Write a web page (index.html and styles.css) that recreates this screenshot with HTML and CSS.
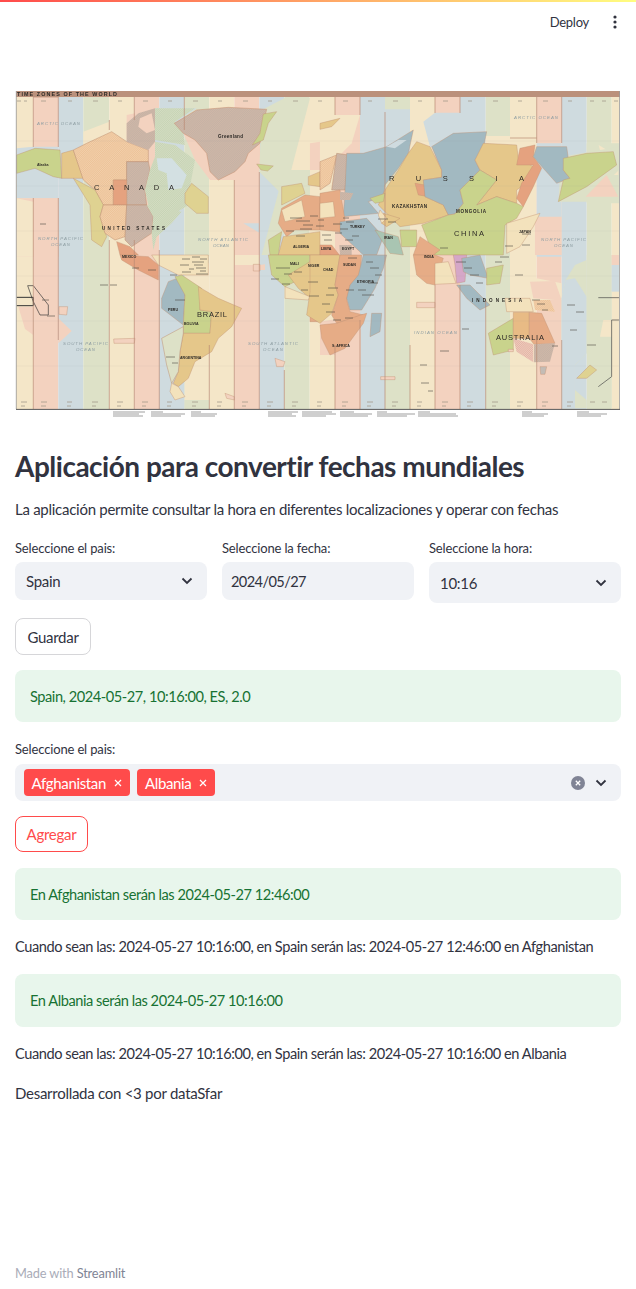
FILE: index.html
```html
<!DOCTYPE html>
<html lang="en">
<head>
    <meta charset="UTF-8" />
    <meta name="viewport" content="width=device-width, initial-scale=1" />
    <title>Aplicación para convertir fechas mundiales</title>
    <link rel="stylesheet" href="styles.css">
</head>
<body>
    <div class="top-line"></div>
    <header class="header">
        <span class="deploy">Deploy</span>
        <svg class="menu" width="4" height="14" viewBox="0 0 4 14"><circle cx="2" cy="2" r="1.6"/><circle cx="2" cy="7" r="1.6"/><circle cx="2" cy="12" r="1.6"/></svg>
    </header>

    <main class="main">
        <svg class="map" viewBox="15 91 606 328" width="606" height="328">
            <defs>
                <pattern id="hatch-grey" width="4.5" height="4.5" patternUnits="userSpaceOnUse" patternTransform="rotate(45)"><rect width="4.5" height="4.5" fill="#c4b2a6"/><rect width="1.8" height="4.5" fill="#d3b8a6"/></pattern>
                <pattern id="hatch-orange" width="4.5" height="4.5" patternUnits="userSpaceOnUse" patternTransform="rotate(45)"><rect width="4.5" height="4.5" fill="#edc297"/><rect width="1.8" height="4.5" fill="#f3d3b0"/></pattern>
                <pattern id="hatch-green" width="4.5" height="4.5" patternUnits="userSpaceOnUse" patternTransform="rotate(45)"><rect width="4.5" height="4.5" fill="#c6d4b4"/><rect width="1.8" height="4.5" fill="#d8dfc7"/></pattern>
                <pattern id="hatch-pink" width="4.5" height="4.5" patternUnits="userSpaceOnUse" patternTransform="rotate(45)"><rect width="4.5" height="4.5" fill="#e4b3a4"/><rect width="1.8" height="4.5" fill="#f0d3c5"/></pattern>
            </defs>

            <!-- time zone stripes -->
            <g>
                <rect class="z-cream" x="16" y="97" width="17.3" height="312"/>
                <rect class="z-peach" x="33.3" y="97" width="25" height="312"/>
                <rect class="z-blue" x="58.3" y="97" width="25" height="312"/>
                <rect class="z-green" x="83.3" y="97" width="26" height="312"/>
                <rect class="z-cream" x="109.3" y="97" width="25" height="312"/>
                <rect class="z-peach" x="134.3" y="97" width="25" height="312"/>
                <rect class="z-blue" x="159.3" y="97" width="25" height="312"/>
                <rect class="z-green" x="184.3" y="97" width="25" height="312"/>
                <rect class="z-cream" x="209.3" y="97" width="25" height="312"/>
                <rect class="z-peach" x="234.3" y="97" width="25" height="312"/>
                <rect class="z-blue" x="259.3" y="97" width="25" height="312"/>
                <rect class="z-green" x="284.3" y="97" width="25.4" height="312"/>
                <rect class="z-cream" x="309.7" y="97" width="25.3" height="312"/>
                <rect class="z-peach" x="335" y="97" width="25" height="312"/>
                <rect class="z-blue" x="360" y="97" width="25" height="312"/>
                <rect class="z-green" x="385" y="97" width="25" height="312"/>
                <rect class="z-cream" x="410" y="97" width="25" height="312"/>
                <rect class="z-peach" x="435" y="97" width="25" height="312"/>
                <rect class="z-blue" x="460" y="97" width="25.7" height="312"/>
                <rect class="z-green" x="485.7" y="97" width="24.3" height="312"/>
                <rect class="z-cream" x="510" y="97" width="26.7" height="312"/>
                <rect class="z-peach" x="536.7" y="97" width="25" height="312"/>
                <rect class="z-blue" x="561.7" y="97" width="25" height="312"/>
                <rect class="z-green" x="586.7" y="97" width="25" height="312"/>
                <rect class="z-cream" x="611.7" y="97" width="7.6" height="312"/>
            </g>

            <!-- north west quarter -->
            <g class="q" transform="translate(15 90) scale(.3333)">
                <polygon class="z-blue" points="5,175 55,170 130,170 130,325 5,325"/>
                <polygon class="z-peach" points="5,325 130,325 130,500 5,500"/>
                <polygon class="z-cream" points="5,325 55,335 55,500 5,500"/>
                <polygon class="z-cream" points="205,125 283,95 283,240 205,240"/>
                <polygon class="z-peach" points="335,75 433,55 433,180 335,180"/>
                <polygon class="z-blue" points="420,55 545,55 478,100 505,130 510,300 420,300"/>
                <polygon class="z-peach" points="478,100 545,60 755,58 745,130 735,160 735,240 733,245 733,500 658,500 658,270 585,270 540,210 505,130"/>
                <polygon class="z-cream" points="583,270 658,270 658,500 583,500"/>
                <polygon class="z-green" points="740,60 808,25 885,25 885,320 808,320 733,245"/>
                <polygon class="z-cream" points="885,25 915,25 915,240 885,320 808,320"/>
                <polygon class="z-green" points="808,240 885,240 885,320 760,495 740,495"/>
                <polygon class="z-blue" points="685,400 733,400 733,428"/>

                <polygon class="l-green" points="5,195 60,175 135,180 140,265 115,260 60,235 5,250"/>
                <polygon class="l-yellow" points="140,190 175,180 205,265 140,265"/>
                <polygon points="175,180 215,160 290,125 335,155 400,180 400,215 335,215 335,270 295,270 295,345 265,345 240,300 205,270" fill="url(#hatch-orange)" stroke="#bf8f72" stroke-width="1.5"/>
                <polygon points="335,215 400,215 405,240 390,300 395,345 335,345" fill="url(#hatch-grey)" stroke="#bf8f72" stroke-width="1.5"/>
                <polygon points="335,100 370,70 420,55 420,155 400,180 335,155" fill="url(#hatch-grey)"/>
                <polygon points="375,85 410,70 420,120 395,130 370,110" fill="#f3d2bf"/>
                <polygon points="420,55 540,55 480,95 505,130 510,165 420,150" fill="url(#hatch-green)"/>
                <polygon points="420,155 480,165 540,210 525,290 530,340 480,370 425,425 410,390 400,345 390,300 405,240 420,200" fill="url(#hatch-green)"/>
                <polygon points="425,205 470,205 515,255 500,295 460,300 455,250 430,240" fill="#d3e0e2"/>
                <polygon class="l-orange-solid" points="295,270 335,270 335,345 295,345"/>
                <polygon class="l-pale-yellow" points="175,265 240,300 265,345 255,380 275,440 260,470 230,450 225,345"/>
                <polygon points="265,345 335,345 330,440 300,450 270,430 255,380" fill="url(#hatch-orange)" stroke="#bf8f72" stroke-width="1.5"/>
                <polygon points="335,345 395,345 415,380 410,430 350,470 330,450" fill="url(#hatch-grey)" stroke="#bf8f72" stroke-width="1.5"/>
                <polygon points="395,345 500,365 470,400 425,440 415,480 410,430 415,380" fill="url(#hatch-green)"/>
                <polygon class="l-orange-solid" points="305,455 345,470 370,495 315,495"/>
                <polygon class="l-pale-yellow" points="510,310 530,280 580,320 580,370 545,370 510,340"/>
                <polygon points="478,100 545,60 640,52 755,58 745,100 735,160 700,190 690,215 660,245 610,270 585,245 575,190 540,150 505,130" fill="url(#hatch-grey)" stroke="#c9906f" stroke-width="1.5"/>
                <polygon class="l-green" points="745,72 785,65 760,100 745,150 712,165 735,130"/>
                <polygon class="l-green" points="725,222 775,228 758,243 738,240"/>
                <polygon class="z-peach" points="885,160 915,155 915,240 885,240"/>
                <polygon class="l-yellow" points="880,260 915,245 915,290 880,285"/>
                <polygon class="l-pale-yellow" points="800,290 860,280 870,310 800,345"/>
                <polygon class="l-orange" points="800,355 870,315 915,320 915,420 840,420 815,440 790,400"/>
                <polygon class="l-cream" points="800,360 860,330 870,380 810,395"/>
                <polygon class="l-yellow" points="805,440 915,425 915,495 790,495"/>
                <polygon class="l-green" points="760,450 800,425 790,495 765,495"/>
            </g>

            <!-- north east quarter -->
            <g class="q" transform="translate(320 90) scale(.3333)">
                <polygon class="z-cream" points="0,75 120,75 95,160 60,195 0,250"/>
                <polygon class="z-blue" points="195,58 270,58 270,190 195,190"/>
                <polygon class="z-blue" points="345,68 420,68 420,190 330,170 310,95"/>
                <polygon class="z-cream" points="497,138 650,138 650,165 497,165"/>
                <polygon class="z-blue" points="650,160 725,160 725,500 650,500"/>
                <polygon class="z-peach" points="645,380 725,380 725,495 645,495"/>
                <polygon class="z-green" points="800,160 897,160 897,340 800,340"/>
                <polygon class="z-cream" points="836,165 895,200 895,255 860,255"/>
                <polygon class="z-green" points="725,200 897,170 897,240 800,335 715,335"/>
                <polygon class="z-peach" points="797,320 860,255 895,320"/>
                <polygon class="l-yellow" points="0,100 60,85 35,110 0,118"/>

                <polygon points="0,215 50,195 30,280 0,300" fill="url(#hatch-orange)" stroke="#bf8f72" stroke-width="1.5"/>
                <polygon points="50,190 85,195 75,300 35,300" fill="url(#hatch-grey)" stroke="#bf8f72" stroke-width="1.5"/>
                <polygon class="l-blue" points="80,190 130,190 200,170 280,120 265,190 235,235 195,285 190,320 145,335 175,370 70,380 75,300"/>
                <polygon class="z-blue" points="200,170 235,150 260,150 225,175"/>
                <polygon class="l-yellow" points="265,190 290,155 330,170 365,240 365,262 310,270 315,320 370,345 385,375 310,400 240,410 175,345 195,300 235,240"/>
                <polygon class="l-orange-solid" points="285,280 315,285 315,318 295,315"/>
                <polygon class="l-green" points="150,325 195,310 190,335 165,340"/>
                <polygon class="l-blue" points="335,170 400,130 500,125 490,175 465,210 480,240 420,300 430,340 405,372 385,375 370,345 315,320 310,270 365,262 365,240"/>
                <polygon class="l-yellow" points="490,160 590,165 595,205 640,230 620,280 590,300 590,340 530,320 470,345 530,270 480,240 465,210"/>
                <polygon class="l-green" points="420,300 480,240 530,270 470,345 530,320 590,340 610,350 590,385 555,405 550,495 340,495 305,405 385,375 405,372 430,340"/>
                <polygon class="l-orange-solid" points="600,175 645,165 640,200 665,235 640,290 610,350 590,325 605,280 640,225 590,225"/>
                <polygon class="l-blue" points="640,200 650,170 740,170 745,205 730,240 750,265 710,280 670,235"/>
                <polygon class="l-green" points="730,205 800,190 880,185 890,225 800,290 715,335 730,270 750,265 730,240"/>
                <polygon class="l-cream" points="560,400 660,370 640,410 600,470 560,490"/>
                <polygon class="l-orange" points="0,310 60,300 75,390 60,425 0,420"/>
                <polygon class="l-cream" points="0,340 40,335 45,380 0,385"/>
                <polygon points="60,305 100,310 90,330 60,330" fill="url(#hatch-grey)"/>
                <polygon class="l-blue" points="60,395 140,385 190,440 170,495 130,495 60,430"/>
                <polygon class="l-teal" points="165,420 235,440 250,495 210,490"/>
                <polygon class="l-green" points="240,420 290,420 290,470 245,470"/>
                <polygon class="l-orange" points="300,440 360,480 340,495 280,495"/>
                <polygon class="l-orange-solid" points="0,465 35,465 58,495 0,495"/>
                <polygon points="58,465 95,465 95,495 60,495" fill="url(#hatch-grey)"/>
                <polygon class="l-yellow" points="190,370 240,385 200,410 185,400"/>
                <polygon class="l-cream" points="180,360 200,385 185,400 175,375"/>
            </g>

            <!-- south west quarter -->
            <g class="q" transform="translate(15 255) scale(.3333)">
                <polygon class="z-cream" points="5,38 55,38 55,460 5,460"/>
                <polygon class="z-peach" points="10,155 55,155 55,240 30,222"/>
                <polygon class="z-peach" points="130,155 130,190 170,228 130,265"/>
                <polygon class="z-cream" points="508,25 583,25 583,435 508,435"/>
                <polygon class="z-green" points="508,435 583,435 583,460 508,460"/>
                <polygon class="z-blue" points="433,45 508,45 508,460 433,460"/>
                <polygon class="z-peach" points="358,45 433,45 433,250 358,250"/>
                <polygon class="z-cream" points="658,0 733,0 733,30 658,30"/>
                <polygon class="z-peach" points="733,30 750,28 750,45 733,45"/>
                <polygon points="38,92 55,92 100,150 100,180 75,180 55,140" fill="none" stroke="#333" stroke-width="2"/>
                <path d="M5 127 H55 V152 H5" fill="none" stroke="#333" stroke-width="3"/>
                <polygon class="l-peach-box" points="296,252 360,250 358,265 297,265"/>
                <polygon class="l-peach-box" points="132,155 158,155 155,180 132,178"/>
                <polygon class="l-peach-box" points="780,310 810,320 805,335 785,335"/>
                <polygon class="l-peach-box" points="630,415 658,425 658,435 635,430"/>

                <polygon class="l-orange-solid" points="315,0 400,5 430,30 430,75 370,45 320,15"/>
                <polygon class="l-cream" points="410,0 580,0 580,60 490,60 430,30"/>
                <polygon class="l-blue" points="460,80 500,65 510,120 505,210 440,160 440,130"/>
                <polygon class="l-green" points="480,65 500,60 560,100 555,165 590,170 585,235 505,235 505,210 510,120"/>
                <polygon class="l-yellow" points="550,95 610,130 680,160 650,215 610,250 590,290 540,320 520,370 490,395 475,385 490,350 495,290 505,235 585,235 590,170 555,165"/>
                <polygon class="z-green" points="440,250 505,215 505,235 495,290 490,350 470,385 455,330" stroke="#bf8f72" stroke-width="1.5"/>
                <polygon class="l-cream" points="470,385 490,395 510,425 480,435 465,410"/>
                <polygon class="l-green" points="760,0 885,0 880,60 810,95 770,60"/>
                <polygon class="l-yellow" points="820,60 885,20 915,0 915,140 880,125 850,100"/>
                <polygon class="l-cream" points="810,95 885,125 880,135 810,130"/>
                <polygon class="l-orange" points="885,135 915,130 915,200 885,200"/>
                <polygon class="l-peach-box" points="715,28 735,28 735,48 715,48"/>
            </g>

            <!-- south east quarter -->
            <g class="q" transform="translate(320 255) scale(.3333)">
                <polygon class="z-peach" points="0,200 122,180 122,460 45,460 45,300 0,300"/>
                <polygon class="z-cream" points="0,300 45,300 45,460 0,460"/>
                <polygon class="z-cream" points="620,70 650,70 725,85 725,135 572,135 572,70"/>
                <polygon class="z-peach" points="630,80 705,78 725,135 725,170 705,135 640,130"/>
                <polygon class="z-green" points="737,75 765,30 800,15 800,295 765,330 765,405 800,435 800,460 725,460 725,130"/>
                <polygon class="z-blue" points="737,75 725,130 725,460 765,460 765,330 800,295 800,125 765,70"/>
                <polygon class="z-green" points="800,0 875,0 875,460 835,460 835,395 875,365 800,295"/>
                <polygon class="z-cream" points="850,195 875,195 875,245 840,245"/>
                <polygon class="z-peach" points="875,0 897,0 897,30 875,30"/>
                <polygon class="z-blue" points="875,30 897,30 897,110 875,110"/>
                <path d="M835 128 H897 M875 195 H897 M835 395 L875 365 V195" fill="none" stroke="#444" stroke-width="2"/>
                <polygon class="z-blue" points="422,60 497,60 497,165 422,165"/>

                <polygon class="l-yellow" points="-30,0 60,0 45,90 55,120 35,175 0,205 -40,180 -30,110"/>
                <polygon class="l-orange" points="60,0 125,0 120,60 90,90 80,135 90,170 130,180 50,205 35,180 55,120 45,90"/>
                <polygon class="l-blue" points="130,0 200,0 190,40 165,100 125,165 90,165 80,130 90,90 115,60"/>
                <polygon class="l-orange" points="0,210 50,205 122,180 140,175 130,205 75,280 30,300 5,250"/>
                <polygon class="l-blue" points="155,175 185,175 180,230 150,245"/>
                <polygon class="l-orange" points="280,0 345,0 370,10 345,90 320,85 290,60"/>
                <polygon class="l-cream" points="345,25 385,20 408,85 345,88"/>
                <polygon class="l-purple" points="400,0 440,0 435,80 410,85 405,30"/>
                <polygon class="l-blue" points="425,10 480,0 505,70 450,60 430,50"/>
                <polygon class="l-green" points="500,40 550,30 540,85 500,90"/>
                <polygon class="l-blue" points="410,90 450,90 510,150 480,165 440,130"/>
                <polygon class="l-cream" points="555,130 630,130 640,170 560,170"/>
                <polygon points="640,135 690,135 705,170 645,165" fill="url(#hatch-orange)"/>
                <polygon class="l-green" points="505,235 580,190 580,285 520,300"/>
                <polygon class="l-yellow-box" points="580,172 628,172 628,250 580,250"/>
                <polygon class="l-orange" points="628,172 665,175 705,265 642,268 628,250"/>
                <polygon points="580,250 640,268 640,322 590,290" fill="url(#hatch-pink)"/>
                <polygon points="642,268 705,265 690,320 642,322" fill="url(#hatch-grey)"/>
                <polygon class="l-grey" points="660,335 680,335 675,358 662,358"/>
                <polygon class="l-pale-yellow" points="770,370 810,330 830,345 800,370"/>
                <polygon class="l-peach-box" points="290,142 345,142 345,158 290,158"/>
                <polygon class="l-peach-box" points="565,283 580,283 580,290 565,290"/>
                <polygon class="l-peach-box" points="182,365 225,365 225,374 182,374"/>
            </g>

            <!-- boundary lines, top and bottom of the chart -->
            <path class="bound" d="M33.3 97 V147 M58.3 97 V147 M109.3 120 V130 M134.3 97 V120 M184.3 97 V130 M209.3 345 V409 M234.3 180 V409 M259.3 172 V409 M33.3 198 V409 M58.3 198 V340 M335 97 V115 M360 97 V115 M435 97 V113 M460 97 V113 M536.7 97 V143 M561.7 97 V143 M385 112 V409 M410 345 V409 M435 285 V409 M460 285 V409 M485.7 300 V409 M536.7 340 V409 M561.7 340 V409 M109.3 240 V409 M134.3 240 V409 M159.3 250 V409 M284.3 370 V409 M335 345 V409 M360 320 V409 M33.3 97 H58.3 M510 138 H536.7"/>
            <path class="gridline" d="M16 141 H619 M16 186 H619 M16 231 H619 M16 276 H619 M16 321 H619 M16 366 H619"/>
            <path class="texture" d="M17 101h4M24 101h3M41 101h5M68 101h4M93 101h5M118 101h4M143 101h5M168 101h4M193 101h5M218 101h4M243 101h5M268 101h4M293 101h5M318 101h4M343 101h5M368 101h4M393 101h5M418 101h4M443 101h5M468 101h4M493 101h5M518 101h4M543 101h5M568 101h4M590 101h4M602 101h4M614 101h4M21 402h6M41 402h6M67 402h5M92 402h6M117 402h6M142 402h6M167 402h5M192 402h6M217 402h5M242 402h6M267 402h6M292 402h6M317 402h5M342 402h6M367 402h6M392 402h6M417 402h5M442 402h6M467 402h6M492 402h6M517 402h6M542 402h6M567 402h6M590 402h5M602 402h5M21 406h4M41 406h5M67 406h4M92 406h4M117 406h4M142 406h4M167 406h4M192 406h4M217 406h4M242 406h4M267 406h4M292 406h4M317 406h4M342 406h4M367 406h4M392 406h4M417 406h4M442 406h4M467 406h4M492 406h4M517 406h4M542 406h4M567 406h4"/>
            <path class="texture-dark" d="M290 218h12M296 221h14M303 225h10M286 231h8M300 229h12M310 216h8M318 220h6M316 226h8M296 236h9M322 235h9M324 240h8M333 224h9M340 229h8M335 233h7M346 222h8M345 240h8M352 236h7M343 218h6M378 219h10M388 222h8M348 258h9M366 262h7M370 268h9M375 275h7M368 283h10M358 290h8M362 295h12M346 290h8M328 288h10M326 295h8M322 304h8M326 312h9M333 320h8M345 318h8M308 282h10M301 290h7M309 296h10M276 268h14M284 274h8M271 279h8M282 284h8M294 272h8M180 265h9M192 262h12M196 268h10M182 272h9M196 274h12M170 275h7M175 300h10M182 259h8M148 270h8M132 268h7M440 248h8M456 262h10M464 268h8M470 275h9M476 283h7M500 257h9M495 262h7M522 234h9M505 246h8M522 245h8M532 300h8M537 304h8M542 310h6M515 275h8M567 305h8M576 312h8M570 330h7M587 345h9M552 346h6M40 224h6M42 300h7M47 316h8M110 285h7M100 285h8M166 357h9M172 363h6M440 351h9M420 365h7M462 329h7M421 383h8M428 391h5M192 257h8M200 259h7M194 265h9M200 271h6M189 269h5"/>
            <path class="legend" d="M113 412h32M113 414h26M113 416h30M151 412h12M151 414h34M151 416h30M191 412h10M191 414h26M191 416h24M268 412h30M268 414h24M268 416h28M302 412h30M302 414h34M302 416h24M340 412h14M340 414h32M340 416h28M377 412h10M377 414h38M377 416h30M418 412h12M418 414h38M418 416h40M522 412h10M522 414h26M522 416h22M577 412h12M577 414h30M577 416h24"/>

            <!-- labels -->
            <rect class="band" x="16" y="91" width="604" height="6"/>
            <text class="title" x="17" y="96" textLength="100">TIME ZONES OF THE WORLD</text>

            <text class="ocean" x="37" y="125" textLength="43">ARCTIC OCEAN</text>
            <text class="ocean" x="514" y="119" textLength="44">ARCTIC OCEAN</text>
            <text class="ocean" x="38" y="240" textLength="45">NORTH PACIFIC</text>
            <text class="ocean" x="51" y="246" textLength="19">OCEAN</text>
            <text class="ocean" x="198" y="241" textLength="50">NORTH ATLANTIC</text>
            <text class="ocean" x="213" y="247" textLength="16">OCEAN</text>
            <text class="ocean" x="541" y="241" textLength="45">NORTH PACIFIC</text>
            <text class="ocean" x="554" y="247" textLength="19">OCEAN</text>
            <text class="ocean" x="63" y="345" textLength="45">SOUTH PACIFIC</text>
            <text class="ocean" x="76" y="351" textLength="19">OCEAN</text>
            <text class="ocean" x="248" y="345" textLength="50">SOUTH ATLANTIC</text>
            <text class="ocean" x="263" y="351" textLength="20">OCEAN</text>
            <text class="ocean" x="414" y="334" textLength="43">INDIAN OCEAN</text>

            <text class="big" x="94" y="190" textLength="80">CANADA</text>
            <text class="big" x="389" y="181" textLength="135">RUSSIA</text>
            <text class="big" x="454" y="236" textLength="30">CHINA</text>
            <text class="big" x="197" y="317" textLength="30">BRAZIL</text>
            <text class="big" x="496" y="340" textLength="48">AUSTRALIA</text>
            <text class="mid" x="102" y="230" textLength="63">UNITED STATES</text>
            <text class="mid" x="392" y="208" textLength="35">KAZAKHSTAN</text>
            <text class="mid" x="456" y="213" textLength="30">MONGOLIA</text>
            <text class="mid" x="472" y="302" textLength="50">INDONESIA</text>
            <text class="mid" x="218" y="138" textLength="25">Greenland</text>
            <text class="small" x="37" y="166">Alaska</text>
            <text class="small" x="293" y="248">ALGERIA</text>
            <text class="small" x="321" y="250">LIBYA</text>
            <text class="small" x="342" y="250">EGYPT</text>
            <text class="small" x="350" y="228">TURKEY</text>
            <text class="small" x="384" y="239">IRAN</text>
            <text class="small" x="424" y="258">INDIA</text>
            <text class="small" x="519" y="233">JAPAN</text>
            <text class="small" x="122" y="258">MEXICO</text>
            <text class="small" x="168" y="311">PERU</text>
            <text class="small" x="184" y="325">BOLIVIA</text>
            <text class="small" x="180" y="359">ARGENTINA</text>
            <text class="small" x="290" y="265">MALI</text>
            <text class="small" x="308" y="267">NIGER</text>
            <text class="small" x="323" y="271">CHAD</text>
            <text class="small" x="343" y="266">SUDAN</text>
            <text class="small" x="357" y="283">ETHIOPIA</text>
            <text class="small" x="332" y="347">S. AFRICA</text>
            <path class="edge" d="M16.3 91 V409 M619.5 91 V409"/>
            <path class="baseline" d="M16 409.4 H620"/>
        </svg>

        <h1 class="app-title">Aplicación para convertir fechas mundiales</h1>
        <p class="text intro">La aplicación permite consultar la hora en diferentes localizaciones y operar con fechas</p>

        <div class="columns">
            <div class="field">
                <label class="label">Seleccione el pais:</label>
                <div class="control">
                    <span>Spain</span>
                    <svg class="chevron" width="12" height="8" viewBox="0 0 12 8"><polyline points="1.5,1.5 6,6 10.5,1.5"/></svg>
                </div>
            </div>
            <div class="field">
                <label class="label">Seleccione la fecha:</label>
                <div class="control control-date"><span>2024/05/27</span></div>
            </div>
            <div class="field">
                <label class="label">Seleccione la hora:</label>
                <div class="control control-time">
                    <span>10:16</span>
                    <svg class="chevron" width="12" height="8" viewBox="0 0 12 8"><polyline points="1.5,1.5 6,6 10.5,1.5"/></svg>
                </div>
            </div>
        </div>

        <button class="btn btn-save">Guardar</button>
        <div class="alert alert-first">Spain, 2024-05-27, 10:16:00, ES, 2.0</div>

        <label class="label label-multi">Seleccione el pais:</label>
        <div class="multi">
            <span class="tag">Afghanistan <svg class="tag-x" width="8" height="8" viewBox="0 0 8 8"><path d="M1 1 L7 7 M7 1 L1 7"/></svg></span>
            <span class="tag">Albania <svg class="tag-x" width="8" height="8" viewBox="0 0 8 8"><path d="M1 1 L7 7 M7 1 L1 7"/></svg></span>
            <svg class="clear" width="14" height="14" viewBox="0 0 14 14"><circle cx="7" cy="7" r="7"/><path d="M4.8 4.8 L9.2 9.2 M9.2 4.8 L4.8 9.2"/></svg>
            <svg class="chevron" width="12" height="8" viewBox="0 0 12 8"><polyline points="1.5,1.5 6,6 10.5,1.5"/></svg>
        </div>

        <button class="btn btn-add">Agregar</button>

        <div class="alert alert-one">En Afghanistan serán las 2024-05-27 12:46:00</div>
        <p class="text after-alert">Cuando sean las: 2024-05-27 10:16:00, en Spain serán las: 2024-05-27 12:46:00 en Afghanistan</p>
        <div class="alert alert-two">En Albania serán las 2024-05-27 10:16:00</div>
        <p class="text after-alert">Cuando sean las: 2024-05-27 10:16:00, en Spain serán las: 2024-05-27 10:16:00 en Albania</p>
        <p class="text credit">Desarrollada con &lt;3 por dataSfar</p>

        <footer class="footer">Made with <span class="footer-name">Streamlit</span></footer>
    </main>
</body>
</html>
```

FILE: styles.css
```css
body {
    margin: 0;
    font-family: 'Lato', 'Noto Sans', sans-serif;
    font-size: 15px;
    letter-spacing: -0.27px;
    color: #31333f;
    background: white;
}

.top-line {
    height: 2px;
    background: linear-gradient(to right, #ff4b4b, #fffd80);
}

.header {
    height: 40px;
    display: flex;
    align-items: center;
    justify-content: flex-end;
    gap: 24px;
    padding-right: 19px;
}

.deploy {
    font-size: 13px;
}

.menu {
    fill: #31333f;
}

.main {
    padding: 49px 15px 0;
}

/* map */
.map {
    display: block;
    filter: blur(0.45px);
    letter-spacing: normal;
}

.z-cream { fill: #f4e6c8; }
.z-peach { fill: #f3d2bf; }
.z-blue { fill: #cfdbdf; }
.z-green { fill: #dde1c7; }

.q polygon[class^="l-"] {
    stroke: #bf8f72;
    stroke-width: 1.2;
    stroke-linejoin: round;
}

.l-blue { fill: #a2b9c1; }
.l-green { fill: #c9d38c; }
.l-yellow { fill: #e5c78a; }
.l-yellow-box { fill: #e8bb85; }
.l-pale-yellow { fill: #dfd291; }
.l-orange { fill: #e6ac86; }
.l-orange-solid { fill: #e5a27f; }
.l-cream { fill: #f3e2bc; }
.l-purple { fill: #d5a7c8; }
.l-teal { fill: #a9c5b2; }
.l-grey { fill: #c3bcb5; }
.l-peach-box { fill: #f3d2bf; }

.bound {
    stroke: #b98a72;
    stroke-width: 0.7;
    fill: none;
}

.gridline {
    stroke: #8a8a80;
    stroke-width: 0.3;
    opacity: 0.25;
    fill: none;
}

.texture {
    stroke: #a39a8c;
    stroke-width: 0.8;
    fill: none;
}

.texture-dark {
    stroke: #4a4640;
    stroke-width: 0.9;
    opacity: 0.65;
    fill: none;
}

.legend {
    stroke: #777;
    stroke-width: 0.7;
    fill: none;
}

.band { fill: #bb917c; }
.edge { stroke: #999; stroke-width: 0.8; fill: none; }
.baseline { stroke: #444; stroke-width: 0.9; fill: none; }

.map text {
    font-family: 'Liberation Sans', sans-serif;
    fill: #2d2a26;
}

.map .title {
    font-size: 5.4px;
    font-weight: bold;
}

.map .ocean {
    font-size: 4.4px;
    font-style: italic;
    fill: #8d9da2;
}

.map .big {
    font-size: 7.5px;
}

.map .mid {
    font-size: 4.6px;
    font-weight: bold;
}

.map .small {
    font-size: 3.6px;
    font-weight: bold;
}

/* text */
.app-title {
    margin: 28px 0 0;
    font-size: 28px;
    letter-spacing: -0.5px;
    line-height: 38px;
    font-weight: 700;
    color: #31333f;
}

.text {
    margin: 0;
    line-height: 24px;
}

.intro {
    margin-top: 12px;
}

.label {
    display: block;
    font-size: 13px;
    letter-spacing: -0.15px;
    line-height: 20px;
}

/* inputs */
.columns {
    display: flex;
    gap: 15px;
    margin-top: 17px;
    align-items: flex-start;
}

.field {
    flex: 1;
}

.control {
    height: 38px;
    margin-top: 4px;
    padding: 0 14px 0 11px;
    display: flex;
    align-items: center;
    justify-content: space-between;
    background: #f0f2f6;
    border-radius: 8px;
}

.control-date {
    padding-left: 9px;
    font-size: 14.6px;
    letter-spacing: -0.6px;
}

.control-time {
    height: 41px;
}

.chevron {
    fill: none;
    stroke: #31333f;
    stroke-width: 1.8;
}

/* buttons */
.btn {
    display: block;
    background: white;
    font-family: inherit;
    font-size: 15px;
    letter-spacing: -0.27px;
    border-radius: 8px;
    padding: 0;
}

.btn-save {
    width: 76px;
    height: 37px;
    margin-top: 15px;
    color: #31333f;
    border: 1px solid #d6d6d9;
}

.btn-add {
    width: 73px;
    height: 36px;
    margin-top: 15px;
    color: #ff4b4b;
    border: 1px solid #ff4b4b;
}

/* alerts */
.alert {
    height: 52px;
    box-sizing: border-box;
    padding: 0 15px;
    display: flex;
    align-items: center;
    background: #e8f6ec;
    color: #177233;
    border-radius: 8px;
    font-size: 14.6px;
    letter-spacing: -0.45px;
}

.alert-first {
    margin-top: 15px;
}

.alert-one {
    margin-top: 16px;
}

.alert-two {
    margin-top: 15px;
    height: 53px;
}

.after-alert {
    margin-top: 15px;
    white-space: nowrap;
    font-size: 14.6px;
    letter-spacing: -0.44px;
}

.credit {
    margin-top: 15px;
}

/* multiselect */
.label-multi {
    margin-top: 17px;
}

.multi {
    height: 37px;
    margin-top: 5px;
    padding: 0 14px 0 8.5px;
    display: flex;
    align-items: center;
    gap: 7px;
    background: #f0f2f6;
    border-radius: 8px;
}

.tag {
    height: 27px;
    padding: 0 8px;
    display: flex;
    align-items: center;
    gap: 8px;
    background: #ff4b4b;
    color: white;
    border-radius: 4px;
    letter-spacing: -0.35px;
}

.tag-x {
    stroke: white;
    stroke-width: 1.2;
    fill: none;
}

.clear {
    margin-left: auto;
    margin-right: 3px;
}

.clear circle {
    fill: #808495;
}

.clear path {
    stroke: white;
    stroke-width: 1.3;
    fill: none;
}

/* footer */
.footer {
    margin-top: 158px;
    line-height: 20px;
    font-size: 12.8px;
    letter-spacing: -0.15px;
    color: #a9acb8;
}

.footer-name {
    color: #808495;
}
```
